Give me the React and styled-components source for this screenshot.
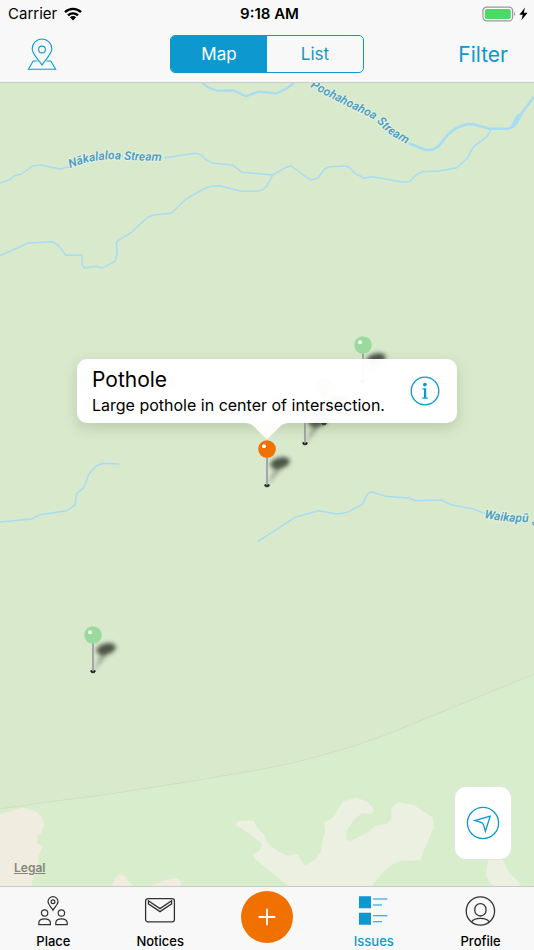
import React, { useState } from 'react'
import styled, { createGlobalStyle } from 'styled-components';

const pins = [
    { id: 1, x: 96, y: 262, color: '#9bda9e', label: 'Issue north east' },
    { id: 2, x: 57, y: 304, color: '#9bda9e', label: 'Issue near intersection' },
    { id: 3, x: 38, y: 324, color: '#9bda9e', label: 'Issue at intersection' },
    { id: 4, x: -174, y: 552, color: '#9bda9e', label: 'Issue south west' },
    { id: 5, x: 0, y: 366, color: '#f07000', label: 'Pothole' },
];

function WifiIcon() {
    return (
        <svg width="18" height="14" viewBox="0 0 18 14" aria-hidden="true">
            <g fill="none" stroke="#000" strokeWidth="2.4">
                <path d="M1 5.2 A11.4 11.4 0 0 1 17 5.2" />
                <path d="M4 8.4 A7.2 7.2 0 0 1 14 8.4" />
            </g>
            <path d="M9 13.4 L5.9 10.3 A4.4 4.4 0 0 1 12.1 10.3 Z" fill="#000" />
        </svg>
    )
}

function BatteryIcon() {
    return (
        <svg width="49" height="16" viewBox="0 0 49 16" aria-hidden="true">
            <rect x="1" y="1.2" width="29.6" height="13.6" rx="3.6" fill="#fff" stroke="#98989a" strokeWidth="1.2" />
            <rect x="2.8" y="3" width="26" height="10" rx="2" fill="#4cd964" />
            <path d="M32 5.6 Q34 8 32 10.4 Z" fill="#98989a" />
            <path d="M43 1.6 L37.4 8.8 H40.8 L39.4 14.2 L45.6 6.8 H41.8 Z" fill="#000" />
        </svg>
    )
}

function MarkerIcon() {
    return (
        <svg width="32" height="34" viewBox="-1 0 32 34" fill="none" stroke="#0d99cf" strokeWidth="1.1" aria-hidden="true">
            <path d="M15 28 C12.5 23.5 5.2 17.5 5.2 11.8 A9.8 9.8 0 0 1 24.8 11.8 C24.8 17.5 17.5 23.5 15 28 Z" />
            <circle cx="15" cy="12.5" r="3.4" />
            <path d="M10.4 24 H6.2 L1.4 32.2 H28.6 L23.8 24 H19.6" />
        </svg>
    )
}

function InfoIcon() {
    return (
        <svg width="30" height="30" viewBox="0 0 30 30" aria-hidden="true">
            <circle cx="15" cy="15" r="13.8" fill="none" stroke="#0d99cf" strokeWidth="1.3" />
            <circle cx="14.9" cy="8.6" r="1.9" fill="#0d99cf" />
            <path d="M12.6 12.2 H16.2 V21.6 H17.8 V22.8 H12.2 V21.6 H14 V13.4 H12.6 Z" fill="#0d99cf" />
        </svg>
    )
}

function LocateIcon() {
    return (
        <svg width="34" height="34" viewBox="0 0 34 34" fill="none" stroke="#0d99cf" strokeWidth="1.3" aria-hidden="true">
            <circle cx="17" cy="17" r="15.6" />
            <path d="M24.2 10.2 L8.8 14.5 L15 16.4 Q17 17 17.5 18.8 L19.4 25.2 Z" />
        </svg>
    )
}

function PlaceIcon() {
    return (
        <svg width="32" height="32" viewBox="0 0 32 32" fill="none" stroke="#333" strokeWidth="1.2" aria-hidden="true">
            <path d="M16 15.2 C14.6 12.4 11 9.6 11 6.6 A5 5 0 0 1 21 6.6 C21 9.6 17.4 12.4 16 15.2 Z" />
            <circle cx="16" cy="6.7" r="1.9" />
            <circle cx="7.6" cy="18" r="3.2" />
            <circle cx="24.4" cy="18" r="3.2" />
            <path d="M1.8 29.6 V27.4 Q2.4 23.8 7.6 23.8 Q12.8 23.8 13.4 27.4 V29.6 Z" />
            <path d="M18.8 29.6 V27.4 Q19.4 23.8 24.4 23.8 Q29.6 23.8 30.2 27.4 V29.6 Z" />
        </svg>
    )
}

function NoticesIcon() {
    return (
        <svg width="32" height="32" viewBox="0 0 32 32" fill="none" stroke="#333" strokeWidth="1.3" aria-hidden="true">
            <rect x="1.6" y="3.6" width="28.8" height="23.2" rx="2.4" />
            <path d="M4.4 5.8 L16 13.6 L27.6 5.8 V8.8 L16 16.6 L4.4 8.8 Z" />
        </svg>
    )
}

function IssuesIcon() {
    return (
        <svg width="32" height="32" viewBox="0 0 32 32" aria-hidden="true">
            <path d="M1 1.2 h12 v12 h-12 Z M1 17.8 h12 v12 h-12 Z" fill="#0d99cf" />
            <path d="M15 4 H29.4 M15 10 H24 M15 20.8 H29.4 M15 26.8 H24" stroke="#0d99cf" strokeWidth="1.1" />
        </svg>
    )
}

function ProfileIcon() {
    return (
        <svg width="32" height="32" viewBox="0 0 32 32" fill="none" stroke="#333" strokeWidth="1.3" aria-hidden="true">
            <circle cx="15.4" cy="16" r="14.2" />
            <rect x="9.8" y="8.6" width="11.2" height="12.4" rx="5.6" />
            <path d="M6.8 26.8 Q8.6 23.4 15.4 23.4 Q22.2 23.4 24 26.8" />
        </svg>
    )
}

function PlusIcon() {
    return (
        <svg width="20" height="20" viewBox="0 0 20 20" aria-hidden="true">
            <path d="M10 2.4 V17.6 M2.4 10 H17.6" stroke="#fff" strokeWidth="1.8" strokeLinecap="round" />
        </svg>
    )
}

function Pin({ color }) {
    return (
        <svg width="56" height="56" viewBox="0 0 56 56" aria-hidden="true">
            <defs>
                <filter id="soft" x="-50%" y="-50%" width="200%" height="200%">
                    <feGaussianBlur stdDeviation="2" />
                </filter>
            </defs>
            <g filter="url(#soft)">
                <path d="M16 50 L24 32 L31 32 Z" fill="#3c4236" opacity="0.4" />
                <ellipse cx="29" cy="27" rx="10" ry="5.5" transform="rotate(-14 29 27)" fill="#333a2e" opacity="0.85" />
            </g>
            <path d="M16 20 V49" stroke="#a6a6aa" strokeWidth="2" />
            <path d="M13.8 48.6 H15 V49.4 H17 V48.6 H18.2 V50 L17.2 50.8 H14.8 L13.8 50 Z" fill="#111" stroke="#111" strokeWidth="0.5" />
            <circle cx="16" cy="13" r="8.8" fill={color} />
            <circle cx="13" cy="10.2" r="2" fill="#fff" />
        </svg>
    )
}

function MapDrawing() {
    return (
        <MapArt viewBox="0 83 534 803" preserveAspectRatio="xMidYMin slice" role="img" aria-label="Map of streams">
            <defs>
                <path id="nakalaloa" d="M70 168 C88 161 103 158.500 120 159.500 S150 161 185 161" />
                <path id="poohahoahoa" d="M310 87 C332 99 355 110 371 118 C382 125 384 132 396 138 L425 155" />
                <path id="waikapu" d="M484 518 C498 521 512 522 528 522 L560 540" />
            </defs>
            <rect y="83" width="534" height="803" fill="#d9e9cc" />
            <path
                d="M0 808.700 L22 806 L40 803 L103 795 L186.700 782 L267 768.300 L293.700 762.700 L338.700 750.700 Q370 741 393.700 731.700 L467 701.700 L534 674 V886 H0 Z"
                fill="#d7edcc"
            />
            <path
                d="M0 808.700 L22 806 L40 803 L103 795 L186.700 782 L267 768.300 L293.700 762.700 L338.700 750.700 Q370 741 393.700 731.700 L467 701.700 L534 674"
                fill="none"
                stroke="#d0dfc3"
            />
            <g fill="#f0ecdf">
                <path d="M0 814 L21.700 807.700 L36.700 811.700 L41.700 816.700 L44.700 824 L41.300 832.700 L37.700 836 L37 843 L42.700 846.700 L38.300 856.700 L37.700 870 L32.300 880.700 L31.700 887 H0 Z" />
                <path d="M111 887 L115 878.300 Q118 874.800 121 874.300 L126 877 L126.700 880 L134.300 887 Z" />
                <path d="M148 887 L166.700 879.700 L176.700 878 L180.300 880.700 L181.300 887 Z" />
            </g>
            <g fill="#ecf0e0">
                <path d="M235.300 824.700 L238 821 H253.700 L256.700 826.700 L265 836 L267 841.700 L269.700 846 L280.300 852.300 L288.700 855.700 L298 853.700 L300.300 859.300 L305.300 865.700 L315.300 859.300 L321 851.300 L322.300 840 L325 832.700 L324 822.700 L333.700 817 L343 801.300 L357 797.700 L367 801.700 Q374 808 373.700 810.700 L371 814.300 L362 813 L353.700 820 L347 830 L346 839 L350.300 841 L367 832.700 L375.300 826 L386.300 824 L391.300 818.700 V808 L398 802 L413.700 805 L433 817.700 L433.700 827.700 L423.700 850.700 L420.700 860 L402 861 Q396 862 392 865 L382 873.300 L371 887 H289.700 L267 869 L255 859 L252.700 854.300 L259.300 850.700 L262.700 844.300 L250 834 Z" />
                <path d="M488.300 858 L486 875 Q489 884 497 887 H521.300 L518.700 881.700 L508.700 872.700 L502 858 Z" />
            </g>
            <g fill="none" stroke="#a8dcf2" strokeWidth="1.500" strokeLinejoin="round">
                <path d="M201.700 82 L208 87.300 L216.700 90.700 L233.300 90.300 L245.700 96.300 L258.300 91.700 L267 92.300 L277 93.300 L287 88.300 L294 83" strokeWidth="2.300" />
                <path d="M0 183.300 L9.300 179.700 L14.300 175.700 L21.700 174 L32.300 166 L40 165 L60 169 L70 166.700 M120 156 L126 157 M165 157.700 L195 153.300 L201 154.700 L206 159.700 L213.300 163.300 L232.700 165 L242.300 172.300 L272.700 175 L285.300 167.700 L291.300 166 L307 177.700 L312 179.700 L317.700 178.300 L324.300 169.300 L329.700 166.700 L346 166 L349.700 167.700 L356 174 L364.300 178 L373 176.700 L402 182 L409.300 181.700 L417 174.300 L422.700 171.700 L438.700 171 L457 167.700 L467 158.300 L473.700 146.700 L487 136.700 L491.300 129" />
                <path d="M0 255.700 L3.300 254.300 L28.300 243 L52.300 241.700 L59 246 L65.700 255.300 H82 L82.300 265 L84.700 268 L96 266.300 L102 268.300 L115 261.300 L117.300 252.700 L116.300 242.700 L118.300 240.300 L131 232.700 L147.700 217.300 L155 214.700 L171.300 213.300 L186 199 L204.300 188.700 L211.700 186.300 L220 185.700 L240.700 191.300 H257.300 L262.300 190 L267 186 L272.700 175" />
                <path d="M408.700 143.300 L423.700 149.300 Q430 150.500 433.700 149 Q439 147 442 142 Q447 134 457 127.700 L467 124 L473 124.300 L490 128.700 L508.700 128.700 L514 126 L520.300 115 L534 96.700" strokeWidth="2.600" />
                <path d="M511 127 L517 115 L523 112 L517 124 Z" fill="#a8dcf2" strokeWidth="1" />
                <path d="M0 522 L31.700 519 L40 514.700 L66.700 510.700 L75 505 L76.700 493.700 L84 487.300 L89 474 L96.700 465.700 L102.700 463.300 L119.300 464" />
                <path d="M257.700 541.700 L295 517.300 L319 510.700 L336.700 514 L347.300 512.300 L362 504.700 L367.300 494.300 L371 491.700 L385.700 496.300 L408.300 498 L416 500.700 L441.700 500 L450.700 504.700 L473.300 509 L485 513.700" />
            </g>
            <StreamName><textPath href="#nakalaloa">Nākalaloa Stream</textPath></StreamName>
            <StreamName><textPath href="#poohahoahoa">Poohahoahoa Stream</textPath></StreamName>
            <StreamName><textPath href="#waikapu">Waikapū Stream</textPath></StreamName>
        </MapArt>
    )
}

function IssueCallout() {
    return (
        <Callout>
            <CalloutText>
                <h2>Pothole</h2>
                <p>Large pothole in center of intersection.</p>
            </CalloutText>
            <IconButton aria-label="Issue details"><InfoIcon /></IconButton>
            <CalloutTail viewBox="0 0 46 17" aria-hidden="true">
                <path d="M0 0 C7 0 9 2.500 12 5.500 L20.500 14 Q23 17 25.500 14 L34 5.500 C37 2.500 39 0 46 0 Z" fill="#fdfefc" />
            </CalloutTail>
        </Callout>
    )
}

function App() {
    const [view, setView] = useState('map');
    const [tab, setTab] = useState('Issues');

    const renderTab = (name, icon) => (
        <Tab $active={tab === name} aria-current={tab === name ? 'page' : undefined} onClick={() => setTab(name)}>
            {icon}
            <span>{name}</span>
        </Tab>
    );

    return (
        <Screen>
            <GlobalStyle />
            <Header>
                <StatusBar>
                    <Carrier>Carrier <WifiIcon /></Carrier>
                    <Clock>9:18 AM</Clock>
                    <Battery><BatteryIcon /></Battery>
                </StatusBar>
                <Toolbar>
                    <IconButton aria-label="Choose place"><MarkerIcon /></IconButton>
                    <Segments>
                        <Segment $active={view === 'map'} aria-pressed={view === 'map'} onClick={() => setView('map')}>Map</Segment>
                        <Segment $active={view === 'list'} aria-pressed={view === 'list'} onClick={() => setView('list')}>List</Segment>
                    </Segments>
                    <FilterButton>Filter</FilterButton>
                </Toolbar>
            </Header>
            <MapArea>
                <MapDrawing />
                {pins.map((pin) => (
                    <PinButton key={pin.id} $x={pin.x} $y={pin.y} aria-label={pin.label}>
                        <Pin color={pin.color} />
                    </PinButton>
                ))}
                <IssueCallout />
                <LegalLink href="#legal">Legal</LegalLink>
                <LocateButton aria-label="Show my location"><LocateIcon /></LocateButton>
            </MapArea>
            <TabBar>
                {renderTab('Place', <PlaceIcon />)}
                {renderTab('Notices', <NoticesIcon />)}
                <AddCell>
                    <AddButton aria-label="Report an issue"><PlusIcon /></AddButton>
                </AddCell>
                {renderTab('Issues', <IssuesIcon />)}
                {renderTab('Profile', <ProfileIcon />)}
            </TabBar>
        </Screen>
    )
}

const GlobalStyle = createGlobalStyle`
    *{
        box-sizing: border-box;
        margin: 0;
        padding: 0;
    }
    body{
        font-family: Inter, "Liberation Sans", sans-serif;
        color: #000;
    }
    button{
        font-family: inherit;
        background: none;
        border: none;
        cursor: pointer;
    }
    svg{
        display: block;
    }
`;

const Screen = styled.div`
    display: flex;
    flex-direction: column;
    min-height: 100vh;
    background: #f8f8f8;
`;

const Header = styled.header`
    border-bottom: 1px solid #c6cbc3;
`;

const StatusBar = styled.div`
    display: grid;
    grid-template-columns: 1fr auto 1fr;
    align-items: center;
    height: 27px;
    padding: 0 3px 0 8px;
    font-size: 15px;
`;

const Carrier = styled.div`
    display: flex;
    align-items: center;
    gap: 7px;
`;

const Clock = styled.div`
    font-weight: 600;
`;

const Battery = styled.div`
    justify-self: end;
`;

const Toolbar = styled.div`
    display: grid;
    grid-template-columns: 1fr auto 1fr;
    align-items: center;
    height: 55px;
    padding: 0 26px 1px;
`;

const IconButton = styled.button`
    justify-self: start;
    flex: none;
`;

const Segments = styled.div`
    display: grid;
    grid-template-columns: 1fr 1fr;
    width: 194px;
    height: 38px;
    border: 1px solid #0d99cf;
    border-radius: 5px;
    overflow: hidden;
`;

const Segment = styled.button`
    font-size: 17px;
    color: ${(props) => (props.$active ? '#fff' : '#0d99cf')};
    background: ${(props) => (props.$active ? '#0d99cf' : 'transparent')};
`;

const FilterButton = styled.button`
    justify-self: end;
    font-size: 21px;
    color: #0d99cf;
`;

const MapArea = styled.main`
    position: relative;
    flex: 1;
    min-height: 640px;
    overflow: hidden;
    background: #d9e9cc;
`;

const MapArt = styled.svg`
    position: absolute;
    inset: 0;
    width: 100%;
    height: 100%;
`;

const StreamName = styled.text`
    font-family: Roboto, "Liberation Sans", sans-serif;
    font-size: 12px;
    font-weight: 600;
    font-style: italic;
    fill: #4a9fc4;
    stroke: #e6f0df;
    stroke-width: 2px;
    paint-order: stroke;
`;

/* x runs from the middle of the map, y from its top, both to the pin's head */
const PinButton = styled.button`
    position: absolute;
    left: calc(50% + ${(props) => props.$x}px);
    top: ${(props) => props.$y}px;
    margin: -13px 0 0 -16px;
`;

const Callout = styled.section`
    position: absolute;
    top: 276px;
    left: 50%;
    transform: translateX(-50%);
    display: flex;
    align-items: center;
    justify-content: space-between;
    width: 380px;
    max-width: 94%;
    min-height: 64px;
    padding: 6px 17px 6px 15px;
    border-radius: 10px;
    background: rgba(255, 255, 255, 0.97);
    box-shadow: 0 5px 14px rgba(60, 90, 40, 0.2);
`;

const CalloutText = styled.div`
    h2{
        font-size: 21px;
        font-weight: 400;
        line-height: 28px;
    }
    p{
        font-size: 16px;
        line-height: 22px;
    }
`;

const CalloutTail = styled.svg`
    position: absolute;
    top: 100%;
    left: 50%;
    width: 46px;
    height: 17px;
    margin-left: -23px;
`;

const LegalLink = styled.a`
    position: absolute;
    left: 14px;
    bottom: 11px;
    font-size: 12px;
    font-weight: 600;
    color: #85857c;
`;

const LocateButton = styled.button`
    position: absolute;
    right: 22px;
    bottom: 26px;
    display: grid;
    place-items: center;
    width: 58px;
    height: 74px;
    border: 1px solid #e3e4e4;
    border-radius: 12px;
    background: #fff;
`;

const TabBar = styled.nav`
    display: grid;
    grid-template-columns: repeat(5, 1fr);
    height: 64px;
    border-top: 1px solid #c6cbc3;
    background: #f8f8f8;
`;

const Tab = styled.button`
    display: flex;
    flex-direction: column;
    align-items: center;
    gap: 5px;
    padding-top: 8px;
    font-size: 13px;
    font-weight: 500;
    line-height: 18px;
    color: ${(props) => (props.$active ? '#0d99cf' : '#000')};
`;

const AddCell = styled.div`
    display: flex;
    justify-content: center;
    padding-top: 4px;
`;

const AddButton = styled.button`
    display: grid;
    place-items: center;
    width: 52px;
    height: 52px;
    border-radius: 50%;
    background: #f07000;
`;

export default App;
